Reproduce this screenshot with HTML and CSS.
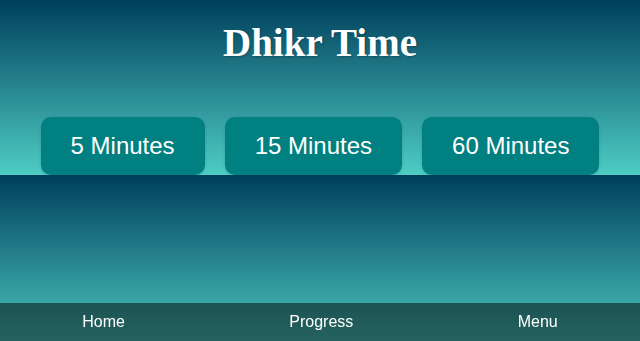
FILE: index.html
```html
<!DOCTYPE html>
<html lang="en">
<head>
<meta charset="utf-8">
<title>Dhikr Time</title>
<link rel="stylesheet" href="styles.css">
</head>
<body>
<main class="app">
  <h1 class="title">Dhikr Time</h1>
  <div class="timers">
    <button class="timer-btn">5 Minutes</button>
    <button class="timer-btn">15 Minutes</button>
    <button class="timer-btn">60 Minutes</button>
  </div>
</main>
<nav class="bottom-nav">
  <a class="nav-link" href="#">Home</a>
  <a class="nav-link" href="#">Progress</a>
  <a class="nav-link" href="#">Menu</a>
</nav>
</body>
</html>
```

FILE: styles.css
```css
html {
  background: linear-gradient(to bottom, #003f5c, #4ecdc4);
}
body {
  margin: 0;
  font-family: "Liberation Sans", Arial, sans-serif;
  color: #fff;
}
.app {
  padding-top: 20px;
  text-align: center;
}
.title {
  margin: 0;
  font-family: "Liberation Serif", "Times New Roman", serif;
  font-weight: bold;
  font-size: 39px;
  line-height: 46px;
  color: #fff;
  text-shadow: 1px 1px 2px rgba(0, 0, 0, 0.25);
}
.timers {
  margin-top: 51px;
  display: flex;
  justify-content: center;
  gap: 20px;
}
.timer-btn {
  font-family: "Liberation Sans", Arial, sans-serif;
  font-size: 24px;
  line-height: 28px;
  padding: 15px 30px;
  border: none;
  border-radius: 10px;
  background: #008080;
  color: #fff;
  box-shadow: 0 1px 3px rgba(0, 0, 0, 0.15);
}
.bottom-nav {
  position: fixed;
  left: 0;
  right: 0;
  bottom: 0;
  height: 38px;
  box-sizing: border-box;
  padding: 10px 0;
  display: flex;
  justify-content: space-around;
  background: rgba(0, 0, 0, 0.5);
}
.nav-link {
  font-size: 16px;
  line-height: 18px;
  color: #fff;
  text-decoration: none;
}
```
